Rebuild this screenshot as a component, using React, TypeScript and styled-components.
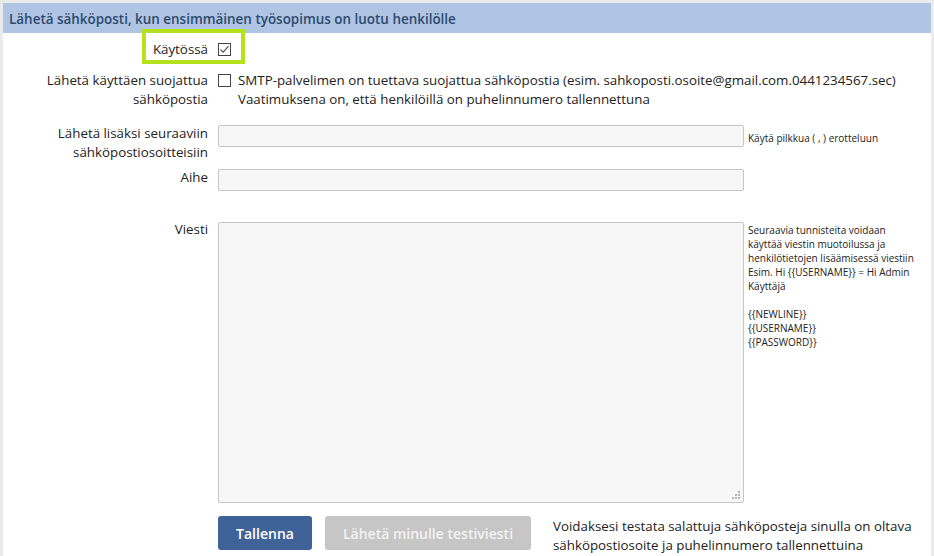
import React from "react";
import styled, { createGlobalStyle } from "styled-components";

const Global = createGlobalStyle`
  html, body { margin: 0; padding: 0; }
  body {
    background: #ebebeb;
    font-family: "Open Sans", "Liberation Sans", sans-serif;
    color: #222;
    width: 934px;
    height: 556px;
    overflow: hidden;
  }
`;

const Page = styled.div`
  padding: 3px 3px 0 3px;
  height: 553px;
`;

const Panel = styled.div`
  background: #fff;
  height: 100%;
  display: flex;
  flex-direction: column;
  overflow: hidden;
`;

const Header = styled.div`
  flex: none;
  height: 30px;
  background: #b0c4e3;
  color: #2c4a70;
  font-size: 13.45px;
  font-weight: 600;
  padding: 2px 0 0 6px;
  box-sizing: border-box;
  display: flex;
  align-items: center;
`;

const Form = styled.div`
  flex: none;
  display: flex;
  flex-direction: column;
  padding-top: 7px;
`;

const Row = styled.div<{ $gap: number }>`
  position: relative;
  display: grid;
  grid-template-columns: 215px 526px 1fr;
  align-items: start;
  margin-top: ${(p) => p.$gap}px;
`;

const Label = styled.div`
  font-size: 13.33px;
  line-height: 19px;
  text-align: right;
  padding-right: 10px;
`;

const Highlight = styled.div`
  position: absolute;
  left: 139px;
  top: -11px;
  width: 103px;
  height: 35px;
  border: 4px solid #b4e21c;
  box-sizing: border-box;
  pointer-events: none;
`;

const CheckCell = styled.div`
  display: flex;
  height: 19px;
`;

const CheckBox = styled.span<{ $top: number }>`
  display: flex;
  align-items: center;
  justify-content: center;
  width: 13px;
  height: 13px;
  border: 1px solid #444;
  box-sizing: border-box;
  background: #fff;
  margin-top: ${(p) => p.$top}px;
  flex: none;
`;

const Wide = styled.div`
  grid-column: 2 / 4;
  display: flex;
  gap: 7px;
  align-items: flex-start;
  font-size: 13.33px;
  line-height: 19px;
`;

const Input = styled.div`
  height: 22px;
  margin-top: 1px;
  background: #f7f7f7;
  border: 1px solid #c6c6c6;
  border-radius: 2px;
  box-sizing: border-box;
`;

const TextAreaBox = styled.div`
  position: relative;
  height: 281px;
  margin-top: 2px;
  background: #f7f7f7;
  border: 1px solid #c6c6c6;
  border-radius: 2px;
  box-sizing: border-box;
`;

const Grip = styled.svg`
  position: absolute;
  right: 2px;
  bottom: 2px;
`;

const Help = styled.div<{ $top: number }>`
  font-size: 10px;
  line-height: 14px;
  padding-left: 4px;
  margin-top: ${(p) => p.$top}px;
  white-space: pre-line;
`;

const Actions = styled.div`
  display: flex;
  align-items: flex-start;
  margin-top: 13px;
  padding-left: 215px;
`;

const Button = styled.button<{ $primary?: boolean }>`
  flex: none;
  height: 34px;
  width: ${(p) => (p.$primary ? 94 : 206)}px;
  border: none;
  border-radius: 3px;
  font-family: "Open Sans", "Liberation Sans", sans-serif;
  font-size: 14px;
  font-weight: 600;
  padding: 0;
  background: ${(p) => (p.$primary ? "#3f6298" : "#c6c6c6")};
  color: ${(p) => (p.$primary ? "#fff" : "#f3f3f3")};
  margin-right: ${(p) => (p.$primary ? 13 : 22)}px;
`;

const Note = styled.div`
  font-size: 13.33px;
  line-height: 19px;
  margin-top: 1px;
`;

function Check({ checked, top }: { checked?: boolean; top: number }) {
  return (
    <CheckBox $top={top}>
      {checked && (
        <svg width="11" height="11" viewBox="0 0 11 11">
          <path d="M1.5 5.5 L4.2 8.2 L9.5 2.2" fill="none" stroke="#555" strokeWidth="1.2" />
        </svg>
      )}
    </CheckBox>
  );
}

export default function App() {
  return (
    <>
      <Global />
      <Page>
        <Panel>
          <Header>Lähetä sähköposti, kun ensimmäinen työsopimus on luotu henkilölle</Header>
          <Form>
            <Row $gap={0}>
              <Label>Käytössä</Label>
              <CheckCell>
                <Check checked top={3} />
              </CheckCell>
              <Highlight />
            </Row>
            <Row $gap={12}>
              <Label>
                Lähetä käyttäen suojattua
                <br />
                sähköpostia
              </Label>
              <Wide>
                <Check top={3} />
                <div>
                  SMTP-palvelimen on tuettava suojattua sähköpostia (esim. sahkoposti.osoite@gmail.com.0441234567.sec)
                  <br />
                  Vaatimuksena on, että henkilöillä on puhelinnumero tallennettuna
                </div>
              </Wide>
            </Row>
            <Row $gap={15}>
              <Label>
                Lähetä lisäksi seuraaviin
                <br />
                sähköpostiosoitteisiin
              </Label>
              <Input />
              <Help $top={7}>Käytä pilkkua ( , ) erotteluun</Help>
            </Row>
            <Row $gap={6}>
              <Label>Aihe</Label>
              <Input />
            </Row>
            <Row $gap={29}>
              <Label>Viesti</Label>
              <TextAreaBox>
                <Grip width="9" height="9" viewBox="0 0 9 9">
                  <g fill="#b5b5b5">
                    <rect x="6" y="0" width="2" height="2" />
                    <rect x="3" y="3" width="2" height="2" />
                    <rect x="6" y="3" width="2" height="2" />
                    <rect x="0" y="6" width="2" height="2" />
                    <rect x="3" y="6" width="2" height="2" />
                    <rect x="6" y="6" width="2" height="2" />
                  </g>
                </Grip>
              </TextAreaBox>
              <Help $top={3}>
                {"Seuraavia tunnisteita voidaan\nkäyttää viestin muotoilussa ja\nhenkilötietojen lisäämisessä viestiin\nEsim. Hi {{USERNAME}} = Hi Admin\nKäyttäjä\n\n{{NEWLINE}}\n{{USERNAME}}\n{{PASSWORD}}"}
              </Help>
            </Row>
            <Actions>
              <Button $primary>Tallenna</Button>
              <Button>Lähetä minulle testiviesti</Button>
              <Note>
                Voidaksesi testata salattuja sähköposteja sinulla on oltava
                <br />
                sähköpostiosoite ja puhelinnumero tallennettuina
              </Note>
            </Actions>
          </Form>
        </Panel>
      </Page>
    </>
  );
}
